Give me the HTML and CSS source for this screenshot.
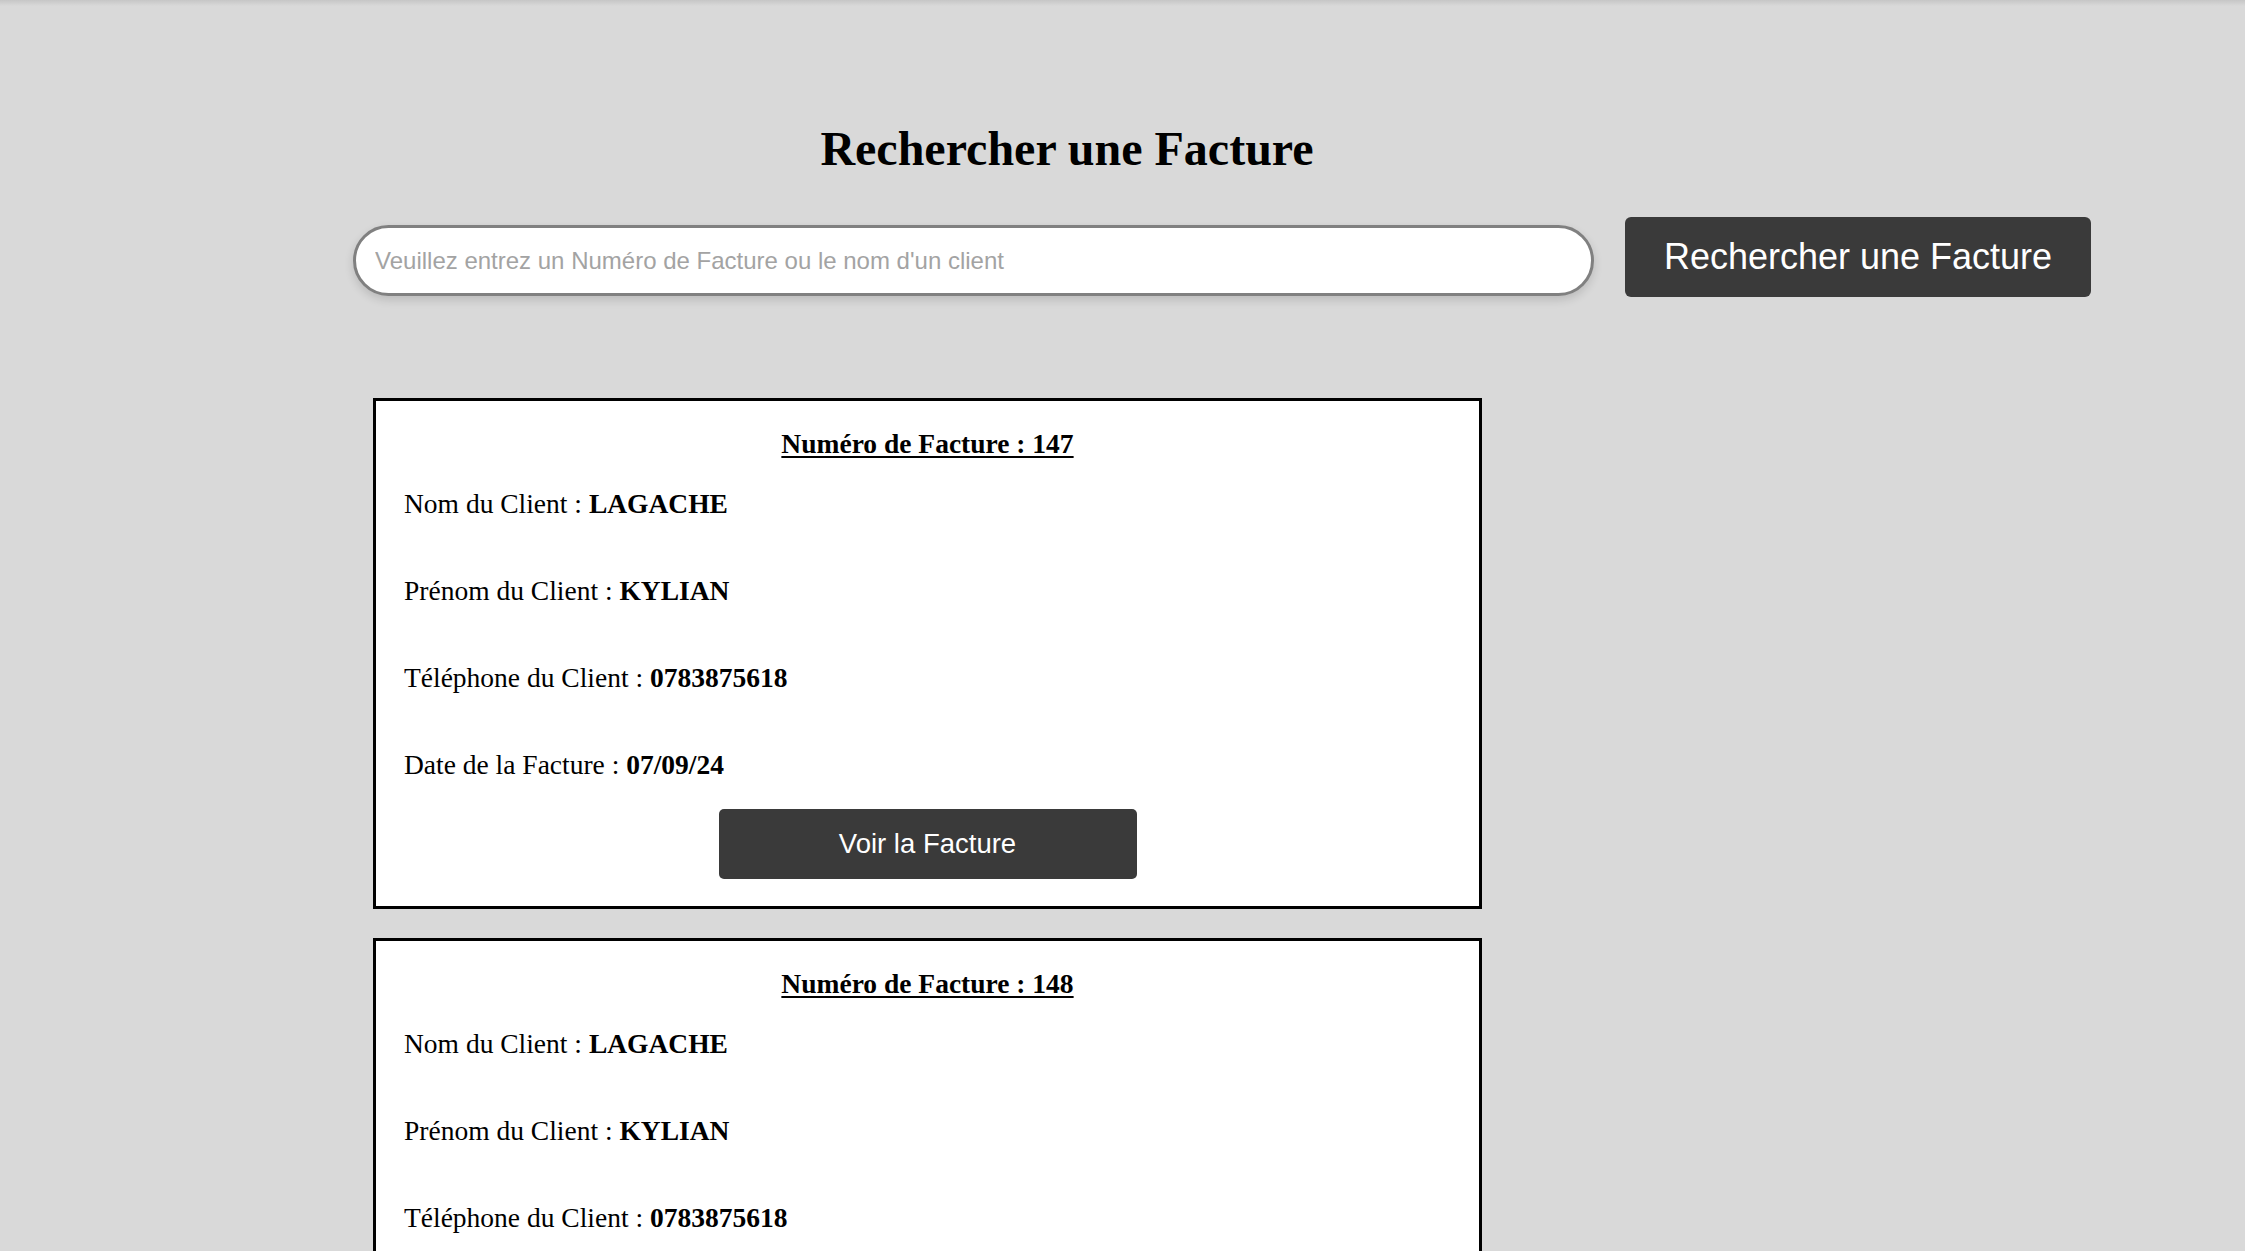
FILE: index.html
```html
<!DOCTYPE html>
<html lang="fr">
<head>
<meta charset="utf-8">
<title>Rechercher une Facture</title>
<link rel="stylesheet" href="styles.css">
</head>
<body>
<div class="topshade"></div>
<main class="page">
  <h1 class="title">Rechercher une Facture</h1>
  <form class="search">
    <input class="search-input" type="text" placeholder="Veuillez entrez un Numéro de Facture ou le nom d'un client">
    <button class="search-btn" type="button">Rechercher une Facture</button>
  </form>
  <section class="results">
    <article class="card">
      <h3 class="card-title">Numéro de Facture : 147</h3>
      <p class="field">Nom du Client : <strong>LAGACHE</strong></p>
      <p class="field">Prénom du Client : <strong>KYLIAN</strong></p>
      <p class="field">Téléphone du Client : <strong>0783875618</strong></p>
      <p class="field">Date de la Facture : <strong>07/09/24</strong></p>
      <button class="view-btn" type="button">Voir la Facture</button>
    </article>
    <article class="card">
      <h3 class="card-title">Numéro de Facture : 148</h3>
      <p class="field">Nom du Client : <strong>LAGACHE</strong></p>
      <p class="field">Prénom du Client : <strong>KYLIAN</strong></p>
      <p class="field">Téléphone du Client : <strong>0783875618</strong></p>
      <p class="field">Date de la Facture : <strong>07/09/24</strong></p>
      <button class="view-btn" type="button">Voir la Facture</button>
    </article>
  </section>
</main>
</body>
</html>
```

FILE: styles.css
```css
html, body {
  margin: 0;
  padding: 0;
  background: #d9d9d9;
  overflow: hidden;
}

body {
  font-family: "Liberation Serif", "Times New Roman", serif;
  color: #000;
  position: relative;
  height: 1251px;
}

.topshade {
  position: absolute;
  left: 0;
  top: 0;
  right: 0;
  height: 6px;
  background: linear-gradient(to bottom, #c6c6c6, rgba(217,217,217,0));
}

.page {
  padding-top: 121px;
}

.title {
  margin: 0;
  padding-right: 111px;
  text-align: center;
  font-size: 48px;
  font-weight: bold;
  line-height: 56px;
}

.search {
  display: flex;
  align-items: flex-start;
  gap: 31px;
  margin-top: 40px;
  padding-left: 353px;
}

.search-input {
  box-sizing: border-box;
  width: 1241px;
  height: 71px;
  margin-top: 8px;
  border: 3px solid #808080;
  border-radius: 36px;
  background: #fff;
  padding: 0 19px;
  font-family: "Liberation Sans", Arial, sans-serif;
  font-size: 24px;
  color: #000;
  box-shadow: 0 4px 10px rgba(0,0,0,0.14);
  outline: none;
}

.search-input::placeholder {
  color: #a3a3a3;
}

.search-btn {
  box-sizing: border-box;
  width: 466px;
  height: 80px;
  border: none;
  border-radius: 6px;
  background: #3a3a3a;
  color: #fff;
  font-family: "Liberation Sans", Arial, sans-serif;
  font-size: 36px;
  padding: 0;
}

.results {
  display: flex;
  flex-direction: column;
  gap: 29px;
  margin-top: 101px;
  padding-left: 373px;
}

.card {
  box-sizing: border-box;
  width: 1109px;
  border: 3px solid #000;
  background: #fff;
  padding: 27px 28px 27px;
  display: flex;
  flex-direction: column;
}

.card-title {
  margin: 0 0 28px;
  text-align: center;
  font-size: 27.5px;
  line-height: 32px;
  font-weight: bold;
  text-decoration: underline;
  text-decoration-thickness: 2px;
  text-underline-offset: 3px;
}

.field {
  margin: 0 0 55px;
  font-size: 27.5px;
  line-height: 32px;
}

.field:last-of-type {
  margin-bottom: 28px;
}

.view-btn {
  align-self: center;
  width: 418px;
  height: 70px;
  border: none;
  border-radius: 5px;
  background: #3a3a3a;
  color: #fff;
  font-family: "Liberation Sans", Arial, sans-serif;
  font-size: 27.5px;
  padding: 0;
}
```
